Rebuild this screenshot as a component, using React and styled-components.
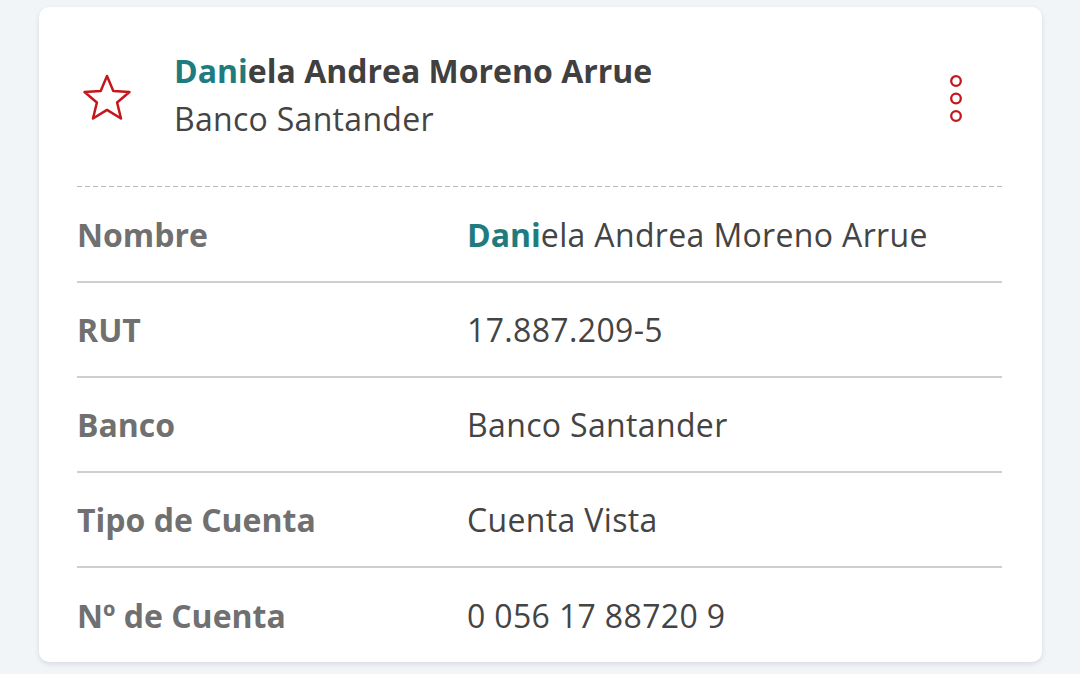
import React from "react";
import styled, { createGlobalStyle } from "styled-components";

const GlobalStyle = createGlobalStyle`
  html, body {
    margin: 0;
    padding: 0;
    background: #f2f5f8;
    font-family: "Open Sans", "Noto Sans", sans-serif;
  }
`;

const Page = styled.div`
  width: 1080px;
  height: 674px;
  padding: 7px 38px 0 39px;
  box-sizing: border-box;
`;

const Card = styled.div`
  background: #fff;
  border-radius: 10px;
  box-shadow: 0 2px 5px rgba(40, 60, 80, 0.14);
  padding: 0 40px 0 38px;
  height: 655px;
  box-sizing: border-box;
`;

const Header = styled.div`
  display: flex;
  align-items: center;
  height: 179px;
`;

const Dashed = styled.div`
  height: 1px;
  margin-bottom: 1px;
  background: repeating-linear-gradient(
    to right,
    #b9b9b9 0,
    #b9b9b9 5px,
    transparent 5px,
    transparent 8px
  );
`;

const StarBox = styled.div`
  width: 97px;
  display: flex;
  align-items: center;
  padding-left: 4px;
  margin-top: 2px;
`;

const Titles = styled.div`
  flex: 1;
  display: flex;
  flex-direction: column;
  gap: 5px;
  margin-top: -4px;
  margin-left: -4px;
`;

const Name = styled.div`
  font-size: 32px;
  line-height: 43px;
  font-weight: 700;
  color: #404040;
`;

const Sub = styled.div`
  font-size: 32px;
  line-height: 43px;
  color: #444;
  letter-spacing: 0.3px;
`;

const Match = styled.span`
  color: #1e7b7e;
  font-weight: 700;
  letter-spacing: 0;
`;

const MenuButton = styled.div`
  width: 60px;
  display: flex;
  justify-content: center;
  margin-right: 16px;
  margin-top: 4px;
`;

const Row = styled.div`
  display: flex;
  align-items: center;
  height: 95px;
  border-bottom: ${(p) => (p.$last ? "none" : "2px solid #cfcfcf")};
  box-sizing: border-box;
`;

const Label = styled.div`
  width: 390px;
  font-size: 32px;
  font-weight: 700;
  color: #707070;
`;

const Value = styled.div`
  font-size: 32px;
  color: #444;
  letter-spacing: 0.35px;
`;

const Star = () => (
  <svg width="52" height="50" viewBox="0 0 52 50" fill="none">
    <path
      d="M26 3 L32.3 17.9 L48.5 19 L36.1 29.5 L40 45.5 L26 36.9 L12 45.5 L15.9 29.5 L3.5 19 L19.7 17.9 Z"
      stroke="#c4161c"
      strokeWidth="2.5"
      strokeLinejoin="round"
    />
  </svg>
);

const Dots = () => (
  <svg width="16" height="50" viewBox="0 0 16 50" fill="none">
    <circle cx="8" cy="7" r="4.8" stroke="#c4161c" strokeWidth="2.3" />
    <circle cx="8" cy="24.5" r="4.8" stroke="#c4161c" strokeWidth="2.3" />
    <circle cx="8" cy="42" r="4.8" stroke="#c4161c" strokeWidth="2.3" />
  </svg>
);

const rows = [
  { label: "Nombre", value: "name" },
  { label: "RUT", value: "17.887.209-5" },
  { label: "Banco", value: "Banco Santander" },
  { label: "Tipo de Cuenta", value: "Cuenta Vista" },
  { label: "Nº de Cuenta", value: "0 056 17 88720 9" },
];

const FullName = () => (
  <>
    <Match>Dani</Match>ela Andrea Moreno Arrue
  </>
);

export default function App() {
  return (
    <Page>
      <GlobalStyle />
      <Card>
        <Header>
          <StarBox>
            <Star />
          </StarBox>
          <Titles>
            <Name>
              <FullName />
            </Name>
            <Sub>Banco Santander</Sub>
          </Titles>
          <MenuButton>
            <Dots />
          </MenuButton>
        </Header>
        <Dashed />
        {rows.map((r, i) => (
          <Row key={r.label} $last={i === rows.length - 1}>
            <Label>{r.label}</Label>
            <Value>{r.value === "name" ? <FullName /> : r.value}</Value>
          </Row>
        ))}
      </Card>
    </Page>
  );
}
